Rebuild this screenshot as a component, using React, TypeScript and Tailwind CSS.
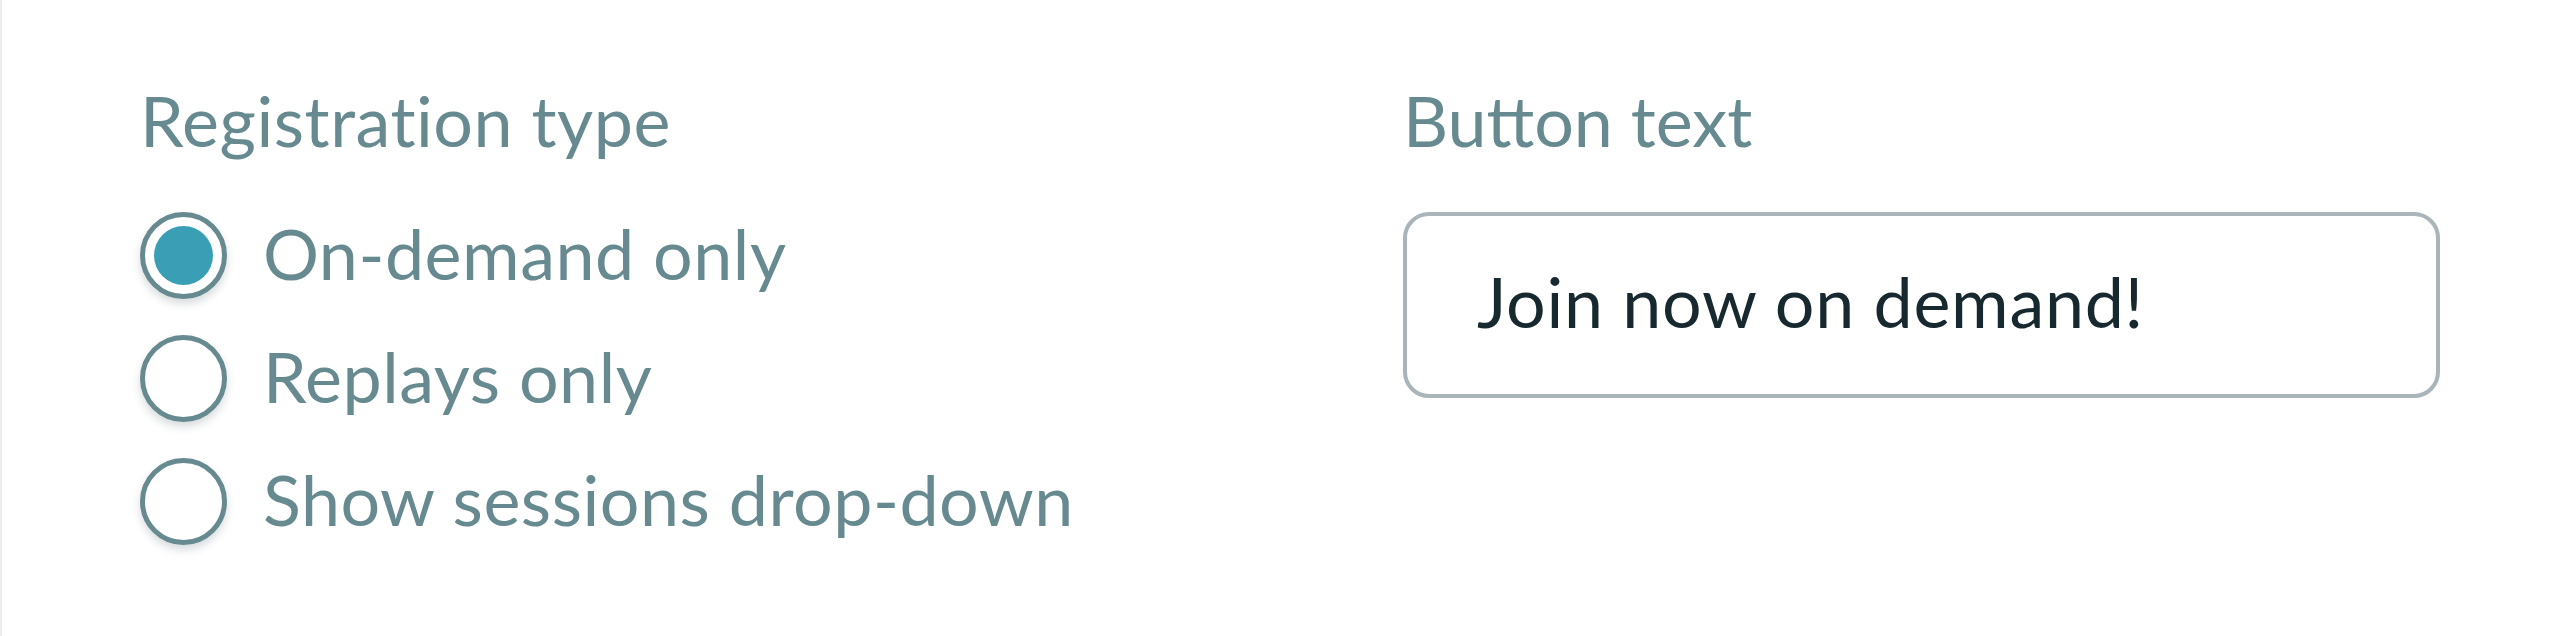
const options = ["On-demand only", "Replays only", "Show sessions drop-down"];

function Radio({ checked }: { checked?: boolean }) {
  return (
    <span className="flex h-[87px] w-[87px] shrink-0 items-center justify-center rounded-full border-[5px] border-[#678a90] bg-white shadow-[0_5px_9px_rgba(40,60,70,0.18)]">
      {checked && <span className="h-[59px] w-[59px] rounded-full bg-[#3a9fb4]" />}
    </span>
  );
}

export default function App() {
  const selected = 0;

  return (
    <div
      className="flex h-[636px] w-[2564px] border-l-2 border-[#ececec] bg-white pl-[138px] pt-[85px] text-[70px] leading-[70px] tracking-[0.5px] text-[#678a90]"
      style={{ fontFamily: "Lato, 'Open Sans', sans-serif" }}
    >
      <div className="w-[1263px]">
        <div>Registration type</div>
        <div className="mt-[57px] flex flex-col gap-[36px]">
          {options.map((label, i) => (
            <label key={label} className="flex items-center gap-[36px]">
              <Radio checked={i === selected} />
              <span className="-mt-[6px]">{label}</span>
            </label>
          ))}
        </div>
      </div>

      <div className="w-[1037px]">
        <div className="tracking-normal">Button text</div>
        <div className="mt-[57px] flex h-[186px] items-center rounded-[26px] border-4 border-[#a9b5b9] pb-[8px] pl-[70px] tracking-[0.7px] text-[#17292f]">
          Join now on demand!
        </div>
      </div>
    </div>
  );
}
